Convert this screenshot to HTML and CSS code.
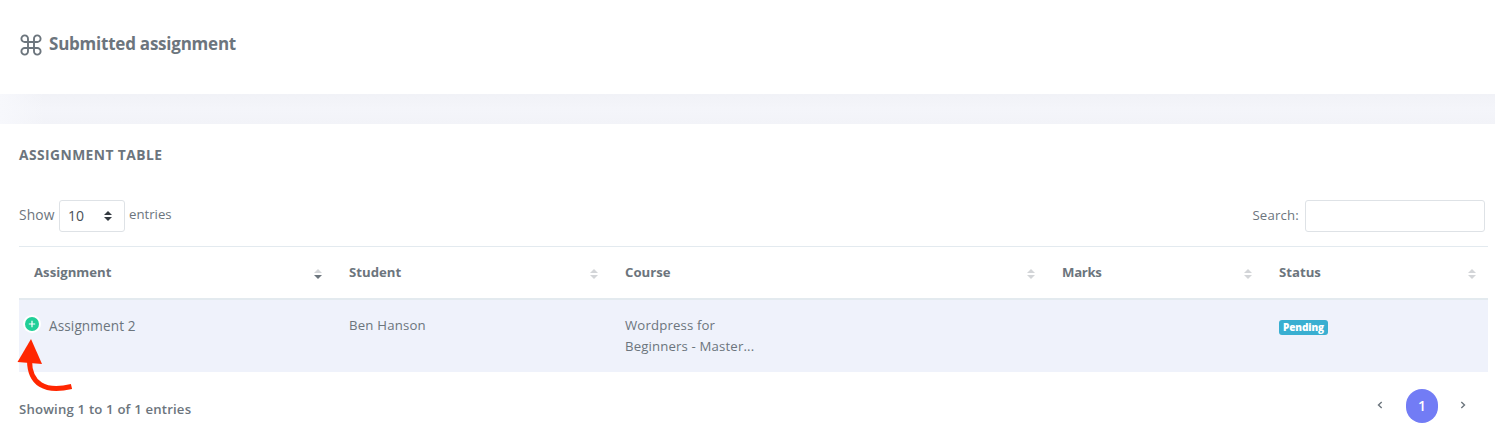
FILE: index.html
```html
<!DOCTYPE html>
<html lang="en">
<head>
<meta charset="utf-8">
<title>Submitted assignment</title>
<link rel="stylesheet" href="styles.css">
</head>
<body>
<header class="page-head">
  <svg class="cmd" viewBox="0 0 22 22"><path d="M8 8V4.9A3.3 3.3 0 1 0 4.9 8H17.1A3.3 3.3 0 1 0 14 4.9V17.1A3.3 3.3 0 1 0 17.1 14H4.9A3.3 3.3 0 1 0 8 17.1Z"/></svg>
  <h1 class="page-title">Submitted assignment</h1>
</header>
<div class="gap"></div>
<main class="card">
  <h2 class="card-title">ASSIGNMENT TABLE</h2>
  <div class="controls">
    <div class="length"><span class="t-show">Show</span>
      <div class="select"><span>10</span><svg viewBox="0 0 8 10"><path d="M0 4L4 0L8 4ZM0 6H8L4 10Z"/></svg></div>
      <span class="t-entries">entries</span></div>
    <label class="search"><span class="t-search">Search:</span><input class="search-input" type="text"></label>
  </div>
  <div class="table">
    <div class="row head">
      <div class="cell"><span>Assignment</span><svg class="sort desc" viewBox="0 0 8 10"><path d="M0 4L4 0L8 4Z"/><path class="down" d="M0 6H8L4 10Z"/></svg></div>
      <div class="cell"><span>Student</span><svg class="sort" viewBox="0 0 8 10"><path d="M0 4L4 0L8 4Z"/><path d="M0 6H8L4 10Z"/></svg></div>
      <div class="cell"><span>Course</span><svg class="sort" viewBox="0 0 8 10"><path d="M0 4L4 0L8 4Z"/><path d="M0 6H8L4 10Z"/></svg></div>
      <div class="cell"><span class="h-marks">Marks</span><svg class="sort" viewBox="0 0 8 10"><path d="M0 4L4 0L8 4Z"/><path d="M0 6H8L4 10Z"/></svg></div>
      <div class="cell"><span>Status</span><svg class="sort" viewBox="0 0 8 10"><path d="M0 4L4 0L8 4Z"/><path d="M0 6H8L4 10Z"/></svg></div>
    </div>
    <div class="row body">
      <div class="cell first"><svg class="plus" viewBox="0 0 18 18"><circle class="ring" cx="9" cy="9" r="9"/><circle class="disc" cx="9" cy="9" r="7"/><path d="M5.8 9H12.2M9 5.8V12.2"/></svg><span class="d-assignment">Assignment 2</span></div>
      <div class="cell"><span class="d-student">Ben Hanson</span></div>
      <div class="cell course"><span>Wordpress for</span><span>Beginners - Master...</span></div>
      <div class="cell"></div>
      <div class="cell"><span class="badge">Pending</span></div>
    </div>
    <svg class="arrow" viewBox="0 0 58 54"><path class="shaft" d="M12.5 21C12.5 45 28 54 54.5 47.5"/><path class="tip" d="M14 0L25 25L0.5 23Z"/></svg>
  </div>
  <footer class="foot">
    <span class="info">Showing 1 to 1 of 1 entries</span>
    <nav class="pager">
      <svg class="chev" viewBox="0 0 6 8"><path d="M4.7 1L1.5 4L4.7 7"/></svg>
      <span class="page">1</span>
      <svg class="chev" viewBox="0 0 6 8"><path d="M1.3 1L4.5 4L1.3 7"/></svg>
    </nav>
  </footer>
</main>
</body>
</html>
```
FILE: styles.css
```css
* { box-sizing: border-box; }
body { margin: 0; height: 447px; overflow: hidden; background: #fff; color: #6c757d; font: 13.2px/21px "Open Sans", sans-serif; }
span, h1, h2 { white-space: nowrap; }
svg { display: block; flex: none; }
.page-head { height: 94px; padding: 33px 0 0 20px; display: flex; gap: 7px; }
.cmd { width: 22px; height: 22px; margin-top: 1px; fill: none; stroke: #6c757d; stroke-width: 1.9; }
.page-title { margin: 0; font-size: 17px; line-height: 22px; font-weight: 700; letter-spacing: -.23px; }
.gap { height: 30px; background: linear-gradient(90deg, #f7f8fc, rgba(247, 248, 252, 0) 45px), linear-gradient(#f1f2f7, #f4f5fa 50%, #f2f3f8); }
.card { height: 323px; padding: 20px 7px 0 19px; background: #fff; }
.card-title { margin: 0; font-size: 13.8px; line-height: 22px; font-weight: 700; letter-spacing: .44px; }
.controls { display: flex; justify-content: space-between; margin-top: 34px; height: 46px; padding-right: 3px; }
.length, .search { display: flex; align-items: center; height: 32px; gap: 4px; }
.length > span { padding-bottom: 3px; }
.t-show { width: 36px; font-size: 13.8px; letter-spacing: .1px; }
.search { gap: 6px; }
.t-search { padding-bottom: 1px; letter-spacing: .2px; }
.select { width: 66px; height: 32px; border: 1px solid #dee2e6; border-radius: 3px; display: flex; align-items: center; justify-content: space-between; padding: 0 12px 1px 8px; color: #495057; font-size: 14px; }
.select svg { width: 8px; height: 10px; fill: #343a40; }
.search-input { width: 180px; height: 32px; border: 1px solid #dee2e6; border-radius: 3px; background: #fff; }
.table { position: relative; }
.row { display: grid; grid-template-columns: 315px 276px 437px 217px 224px; }
.head { height: 54px; border-top: 1px solid #e3eaef; border-bottom: 2px solid #e3eaef; font-weight: 700; }
.cell { padding: 15px; display: flex; }
.head .cell { justify-content: space-between; padding-right: 12px; }
.h-marks { letter-spacing: -.3px; }
.sort { width: 8px; height: 10px; margin-top: 7px; fill: #d3d5d8; }
.desc .down { fill: #6c757d; }
.body { height: 72px; background: #eff2fb; }
.first { padding-left: 4px; gap: 8px; }
.plus { width: 18px; height: 18px; }
.ring { fill: #fff; }
.disc { fill: #20cf98; }
.plus path { stroke: #fff; stroke-width: 1.2; }
.d-assignment { font-size: 13.6px; letter-spacing: .1px; }
.d-student { letter-spacing: .2px; }
.course { flex-direction: column; letter-spacing: .15px; }
.badge { width: 49px; height: 15px; margin-top: 5px; border-radius: 3px; background: #39afd1; color: #fff; font-size: 10px; line-height: 14px; font-weight: 800; text-align: center; letter-spacing: -.1px; }
.arrow { position: absolute; left: -2px; top: 93px; width: 58px; height: 54px; }
.shaft { fill: none; stroke: #ff2600; stroke-width: 5; }
.tip { fill: #ff2600; }
.foot { display: flex; justify-content: space-between; padding: 17px 22px 0 0; }
.info { font-weight: 600; margin-top: 10px; letter-spacing: .17px; }
.pager { display: flex; gap: 22px; }
.pager .page { margin-left: 1px; }
.page { width: 32px; height: 34px; border-radius: 17px; background: #727cf5; color: #fff; text-align: center; font-size: 14px; line-height: 33px; font-weight: 600; }
.chev { width: 6px; height: 8px; margin-top: 12px; fill: none; stroke: #6c757d; stroke-width: 1.4; }
```
